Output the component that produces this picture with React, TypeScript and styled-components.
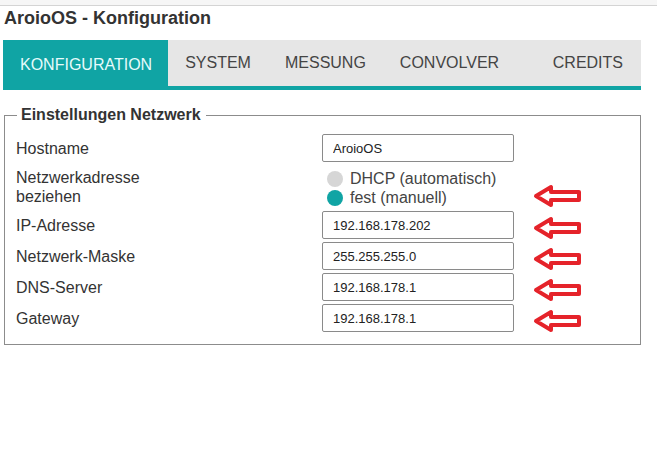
import React from "react";
import styled, { createGlobalStyle } from "styled-components";

const Global = createGlobalStyle`
  html, body { margin: 0; padding: 0; background: #fff; }
  body { font-family: "Liberation Sans", Arial, sans-serif; color: #333; }
`;

const TEAL = "#10a4a4";

const TopStrip = styled.div`
  height: 5px;
  background: #f6f6f6;
  border-bottom: 1px solid #d4d4d4;
`;

const Page = styled.div`
  padding: 0 16px 0 3px;
`;

const Title = styled.h1`
  margin: 0;
  padding: 1px 0 0 1px;
  height: 33px;
  font-size: 18px;
  font-weight: bold;
  line-height: 22px;
  color: #333;
`;

const TabBar = styled.nav`
  display: flex;
  height: 46px;
  background: #e6e6e6;
  border-bottom: 4px solid ${TEAL};
`;

const Tab = styled.div<{ $active?: boolean; $last?: boolean }>`
  display: flex;
  align-items: center;
  padding: ${(p) => (p.$active ? "0 16px 0 17px" : "0 17px")};
  margin-left: ${(p) => (p.$last ? "auto" : "0")};
  margin-right: ${(p) => (p.$last ? "1px" : "0")};
  font-size: 16px;
  color: ${(p) => (p.$active ? "#e6fbfb" : "#444")};
  background: ${(p) => (p.$active ? TEAL : "transparent")};
  height: ${(p) => (p.$active ? "50px" : "46px")};
`;

const Fieldset = styled.fieldset`
  margin: 16px 0 0 1px;
  padding: 10px 11px 12px 11px;
  border: 1px solid #8c8c8c;
  min-width: 0;
`;

const Legend = styled.legend`
  margin-left: 1px;
  padding: 0 5px 0 4px;
  font-size: 16px;
  font-weight: bold;
  color: #333;
`;

const Grid = styled.div`
  display: grid;
  grid-template-columns: 306px 192px auto;
  grid-template-rows: 28px 43px 28px 28px 28px 28px;
  row-gap: 3px;
`;

const Label = styled.div`
  align-self: center;
  font-size: 16px;
  line-height: 19px;
  color: #333;
`;

const Input = styled.input`
  box-sizing: border-box;
  width: 192px;
  height: 28px;
  border: 1px solid #8a8a8a;
  border-radius: 2px;
  padding: 0 0 0 10px;
  font-family: "Liberation Sans", Arial, sans-serif;
  font-size: 13px;
  color: #222;
  background: #fff;
  outline: none;
`;

const RadioGroup = styled.div`
  display: flex;
  flex-direction: column;
  justify-content: center;
  padding: 4px 0 0 5px;
`;

const RadioRow = styled.label`
  display: flex;
  align-items: center;
  gap: 7px;
  height: 21px;
  font-size: 16px;
  color: #444;
`;

const Dot = styled.span<{ $on?: boolean }>`
  width: 16px;
  height: 16px;
  border-radius: 50%;
  background: ${(p) => (p.$on ? TEAL : "#d6d6d6")};
`;

const ArrowCell = styled.div<{ $end?: boolean }>`
  display: flex;
  align-items: ${(p) => (p.$end ? "flex-end" : "flex-start")};
  padding: ${(p) => (p.$end ? "0 0 0 19px" : "5px 0 0 19px")};
`;

const Arrow = () => (
  <svg width="49" height="24" viewBox="0 0 49 24">
    <polygon
      points="3,12 18,3 18,8 46,8 46,16 18,16 18,21"
      fill="#fff"
      stroke="#e5232a"
      strokeWidth="4"
      strokeLinejoin="round"
    />
  </svg>
);

const rows = [
  { label: "IP-Adresse", value: "192.168.178.202" },
  { label: "Netzwerk-Maske", value: "255.255.255.0" },
  { label: "DNS-Server", value: "192.168.178.1" },
  { label: "Gateway", value: "192.168.178.1" },
];

export default function App() {
  return (
    <>
      <Global />
      <TopStrip />
      <Page>
        <Title>AroioOS - Konfiguration</Title>
        <TabBar>
          <Tab $active>KONFIGURATION</Tab>
          <Tab>SYSTEM</Tab>
          <Tab>MESSUNG</Tab>
          <Tab>CONVOLVER</Tab>
          <Tab $last>CREDITS</Tab>
        </TabBar>
        <Fieldset>
          <Legend>Einstellungen Netzwerk</Legend>
          <Grid>
            <Label>Hostname</Label>
            <Input defaultValue="AroioOS" />
            <div />
            <Label>
              Netzwerkadresse
              <br />
              beziehen
            </Label>
            <RadioGroup>
              <RadioRow>
                <Dot />
                DHCP (automatisch)
              </RadioRow>
              <RadioRow>
                <Dot $on />
                fest (manuell)
              </RadioRow>
            </RadioGroup>
            <ArrowCell $end>
              <Arrow />
            </ArrowCell>
            {rows.map((r) => (
              <React.Fragment key={r.label}>
                <Label>{r.label}</Label>
                <Input defaultValue={r.value} />
                <ArrowCell>
                  <Arrow />
                </ArrowCell>
              </React.Fragment>
            ))}
          </Grid>
        </Fieldset>
      </Page>
    </>
  );
}
